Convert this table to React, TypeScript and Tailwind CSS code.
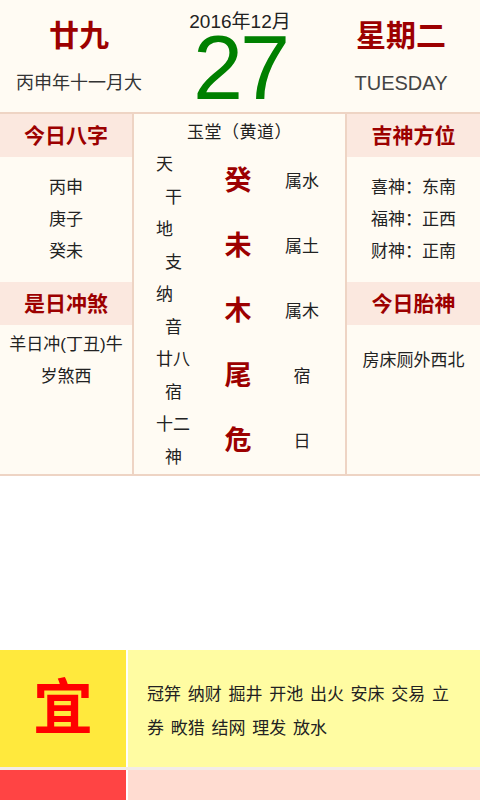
const CJK = { fontFamily: '"Liberation Sans", "Noto Sans CJK SC", sans-serif' }

// 中栏五行：左侧小字 / 中间红字 / 右侧属性
const rows = [
  { a: '天', b: '干', big: '癸', right: '属水' },
  { a: '地', b: '支', big: '未', right: '属土' },
  { a: '纳', b: '音', big: '木', right: '属木' },
  { a: '廿八', b: '宿', big: '尾', right: '宿' },
  { a: '十二', b: '神', big: '危', right: '日' },
]

function Band({ title }: { title: string }) {
  return (
    <div className="h-[43px] bg-[#fbe8df] flex items-center justify-center text-[21px] font-bold text-[#9c0000] leading-none">
      {title}
    </div>
  )
}

export default function App() {
  return (
    <div className="w-[480px] h-[800px] overflow-hidden bg-white flex flex-col text-[#222]" style={CJK}>
      {/* 顶部日期 */}
      <div className="h-[112px] bg-[#fffbf3] flex shrink-0">
        <div className="w-[158px] flex flex-col items-center">
          <div className="mt-[17px] text-[30px] leading-[38px] font-bold text-[#9c0000]">廿九</div>
          <div className="mt-[18px] text-[18px] leading-[20px] text-[#333]">丙申年十一月大</div>
        </div>
        <div className="w-[164px] flex flex-col items-center">
          <div className="mt-[11px] text-[19px] leading-[22px] text-[#222]">2016年12月</div>
          <div className="mt-[2px] text-[90px] leading-[66px] text-[#008000] tracking-[-3px]">27</div>
        </div>
        <div className="w-[158px] flex flex-col items-center">
          <div className="mt-[17px] text-[30px] leading-[38px] font-bold text-[#9c0000]">星期二</div>
          <div className="mt-[18px] text-[20px] leading-[20px] text-[#444]">TUESDAY</div>
        </div>
      </div>

      {/* 八字 / 黄道 / 吉神 表格 */}
      <div className="h-[364px] shrink-0 bg-[#fffbf3] border-y-2 border-[#eed4c4] flex">
        <div className="w-[132px] flex flex-col">
          <Band title="今日八字" />
          <div className="h-[125px] flex flex-col items-center justify-center text-[17px] leading-[32px]">
            <div>丙申</div>
            <div>庚子</div>
            <div>癸未</div>
          </div>
          <Band title="是日冲煞" />
          <div className="flex flex-col items-center pt-[4px] text-[17px] leading-[32px]">
            <div>羊日冲(丁丑)牛</div>
            <div>岁煞西</div>
          </div>
        </div>

        <div className="w-[215px] border-x-2 border-[#eed4c4] flex flex-col">
          <div className="h-[35px] flex items-center justify-center text-[17px] pt-[3px] tracking-[0.5px]">玉堂（黄道）</div>
          {rows.map(r => (
            <div key={r.big} className="h-[65px] flex items-center">
              <div className="w-[78px] pl-[22px] text-[17px] leading-[32.5px]">
                <div>{r.a}</div>
                <div className="pl-[9px]">{r.b}</div>
              </div>
              <div className="w-[52px] text-center text-[27px] font-bold text-[#9c0000]">{r.big}</div>
              <div className="w-[76px] text-center text-[17px]">{r.right}</div>
            </div>
          ))}
        </div>

        <div className="flex-1 flex flex-col">
          <Band title="吉神方位" />
          <div className="h-[125px] flex flex-col items-center justify-center text-[17px] leading-[32px]">
            <div>喜神：东南</div>
            <div>福神：正西</div>
            <div>财神：正南</div>
          </div>
          <Band title="今日胎神" />
          <div className="flex flex-col items-center pt-[20px] text-[17px] leading-[32px]">
            <div>房床厕外西北</div>
          </div>
        </div>
      </div>

      <div className="h-[174px] shrink-0 bg-white" />

      {/* 宜 / 忌 */}
      <div className="flex flex-col bg-[#f3ece7] gap-[3px]">
        <div className="h-[117px] flex gap-[2px] bg-white">
          <div className="w-[126px] bg-[#ffe93d] flex items-center justify-center text-[60px] font-bold text-[#ff0000] leading-none">
            宜
          </div>
          <div className="flex-1 bg-[#fffca2] flex items-center pl-[19px] pr-[28px] pt-[6px] text-[17px] leading-[34px] text-[#222] [word-spacing:2px]">
            冠笄 纳财 掘井 开池 出火 安床 交易 立券 畋猎 结网 理发 放水
          </div>
        </div>
        <div className="h-[40px] flex gap-[2px] bg-white">
          <div className="w-[126px] bg-[#ff4444]" />
          <div className="flex-1 bg-[#ffdcd1]" />
        </div>
      </div>
    </div>
  )
}
